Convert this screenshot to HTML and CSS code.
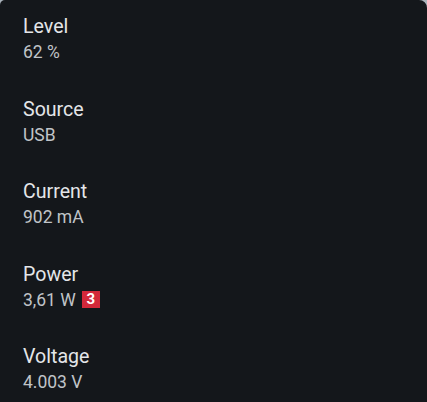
FILE: index.html
```html
<!DOCTYPE html>
<html>
<head>
<meta charset="utf-8">
<link rel="stylesheet" href="styles.css">
</head>
<body>
<div class="panel">
  <div class="item"><div class="title">Level</div><div class="summary">62 %</div></div>
  <div class="item"><div class="title">Source</div><div class="summary">USB</div></div>
  <div class="item"><div class="title">Current</div><div class="summary">902 mA</div></div>
  <div class="item"><div class="title">Power</div><div class="summary">3,61 W <span class="badge">3</span></div></div>
  <div class="item"><div class="title">Voltage</div><div class="summary">4.003 V</div></div>
</div>
</body>
</html>
```
FILE: styles.css
```css
html, body {
  margin: 0;
  padding: 0;
  background: #aab3bb;
}
body {
  width: 427px;
  height: 402px;
  overflow: hidden;
  font-family: Roboto, "Noto Sans", sans-serif;
}
.panel {
  background: #14171b;
  height: 402px;
  border-radius: 5px 8px 0 0;
  display: flex;
  flex-direction: column;
  padding: 15px 23px 0;
  box-sizing: border-box;
  overflow: hidden;
}
.item {
  height: 82.5px;
  flex-shrink: 0;
  display: flex;
  flex-direction: column;
}
.title {
  color: #e4e6e9;
  font-size: 19.6px;
  line-height: 24px;
}
.summary {
  color: #c0c4c8;
  font-size: 17.5px;
  line-height: 24px;
  margin-top: 1px;
  display: flex;
  align-items: center;
  gap: 6px;
}
.badge {
  display: inline-flex;
  align-items: center;
  justify-content: center;
  width: 18px;
  height: 17px;
  background: #d3283a;
  color: #ffffff;
  font-weight: 700;
  font-size: 15px;
  line-height: 17px;
}
```
